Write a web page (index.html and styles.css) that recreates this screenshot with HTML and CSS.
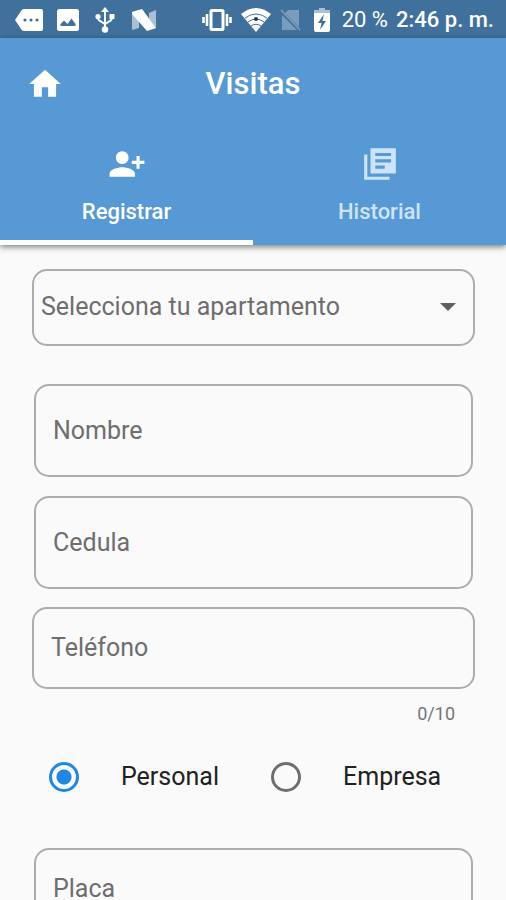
FILE: index.html
```html
<!DOCTYPE html>
<html lang="es">
    <head>
        <meta charset="UTF-8">
        <meta name="viewport" content="width=device-width, initial-scale=1">
        <title>Visitas</title>
        <link rel="stylesheet" href="styles.css">
    </head>
    <body>
        <div class="status">
            <div class="status-left">
                <svg width="28" height="24" viewBox="0 0 28 24">
                    <path fill="#fff" d="M9 1h17q2 0 2 2v18q0 2-2 2H9q-2 0-3-2L0 12l6-9q1-2 3-2z"/>
                    <g fill="#40719d"><circle cx="10" cy="12" r="1.6"/><circle cx="16" cy="12" r="1.6"/><circle cx="22" cy="12" r="1.6"/></g>
                </svg>
                <svg width="22" height="24" viewBox="0 0 22 24">
                    <rect y="1" width="22" height="22" rx="2.5" fill="#fff"/>
                    <path fill="#40719d" d="M3.500 18v-2l3.500-3.500 3.500 3.500 4-5.500 4 5.500v2z"/>
                </svg>
                <svg width="24" height="26" viewBox="0 0 24 26">
                    <g fill="none" stroke="#fff" stroke-width="2">
                        <path d="M12 4v18M5 9v2q0 2 2 3l5 3 5-3q2-1 2-3V9"/>
                    </g>
                    <g fill="#fff"><path d="M12 0l4 5H8z"/><circle cx="12" cy="22.500" r="3.200"/><circle cx="5" cy="9.500" r="2.600"/><path d="M16.500 7h5v5h-5z"/></g>
                </svg>
                <svg width="26" height="24" viewBox="0 0 26 24">
                    <path fill="#a9c0d5" d="M1 4l7-2v18l-7 2zM18 5l7-3v18l-7 2z"/>
                    <path fill="#fff" d="M1 4l10-3 14 19-9 3L1 6z"/>
                </svg>
            </div>
            <div class="status-right">
                <svg width="30" height="24" viewBox="0 0 30 24">
                    <rect x="9" y="2.500" width="12" height="19" rx="1" fill="none" stroke="#fff" stroke-width="3"/>
                    <path fill="none" stroke="#fff" stroke-width="2.600" d="M5 6v12M25 6v12M1.500 9v6M28.500 9v6"/>
                </svg>
                <svg width="32" height="26" viewBox="0 0 32 26">
                    <path fill="#fff" d="M1 7Q16-5 31 7L16 25z"/>
                    <path fill="none" stroke="#40719d" stroke-width="1" d="M5 11q11-8 22 0M8 15q8-6 16 0M11 19q5-3.500 10 0"/>
                    <circle cx="16" cy="12" r="2" fill="#173a59"/>
                </svg>
                <svg width="22" height="24" viewBox="0 0 22 24">
                    <path fill="#7b9dbd" d="M8 2h11v17L5 5zM2 7l15 15H2z"/>
                    <path stroke="#7b9dbd" stroke-width="1.800" d="M1 2l19 20"/>
                </svg>
                <svg width="24" height="26" viewBox="0 0 24 26">
                    <path fill="#a9c0d5" d="M9 1h6v2h5v4H4V3h5z"/>
                    <path fill="#fff" d="M4 6h16v17q0 2-2 2H6q-2 0-2-2z"/>
                    <path fill="#40719d" d="M14 7l-6 9h3.500L10 23l6-9h-3.500z"/>
                </svg>
                <span>20 %</span>
                <span class="time">2:46 p. m.</span>
            </div>
        </div>
        <header class="header">
            <div class="bar">
                <a class="home" href="#" aria-label="Inicio">
                    <svg width="38" height="38" viewBox="0 0 24 24"><path fill="#fff" d="M10 20v-6h4v6h5v-8h3L12 3 2 12h3v8z"/></svg>
                </a>
                <h1 class="title">Visitas</h1>
            </div>
            <nav class="tabs">
                <a class="tab active" href="#registrar">
                    <svg width="38" height="38" viewBox="0 0 24 24"><path fill="currentColor" d="M9 12c2.210 0 4-1.790 4-4s-1.790-4-4-4-4 1.790-4 4 1.790 4 4 4zm0 2c-2.670 0-8 1.340-8 4v2h16v-2c0-2.660-5.330-4-8-4zM20 10V7h-2v3h-3v2h3v3h2v-3h3v-2z"/></svg>
                    Registrar
                </a>
                <a class="tab" href="#historial">
                    <svg width="38" height="38" viewBox="0 0 24 24"><path fill="currentColor" d="M4 6H2v16h16v-2H4V6zm18-4H6v16h16V2zm-3 9H9V9h10v2zm-4 4H9v-2h6v2zm4-8H9V5h10v2z"/></svg>
                    Historial
                </a>
            </nav>
        </header>
        <form class="form" id="registrar">
            <div class="select">
                <select aria-label="Apartamento">
                    <option>Selecciona tu apartamento</option>
                </select>
                <svg class="arrow" width="16" height="8" viewBox="0 0 16 8"><path fill="#616161" d="M0 0h16L8 8z"/></svg>
            </div>
            <div class="group">
                <label class="field"><span>Nombre</span><input type="text" placeholder=" "></label>
                <label class="field"><span>Cedula</span><input type="text" placeholder=" "></label>
            </div>
            <label class="field short phone"><span>Teléfono</span><input type="tel" maxlength="10" placeholder=" "></label>
            <div class="counter">0/10</div>
            <div class="radios">
                <label class="radio"><input type="radio" name="tipo" checked>Personal</label>
                <label class="radio"><input type="radio" name="tipo">Empresa</label>
            </div>
            <div class="group">
                <label class="field short"><span>Placa</span><input type="text" placeholder=" "></label>
            </div>
        </form>
    </body>
</html>
```
FILE: styles.css
```css
* {
    box-sizing: border-box;
}

body {
    display: flex;
    flex-direction: column;
    height: 100vh;
    margin: 0;
    overflow: hidden;
    color: #212121;
    font: 25px/32px Roboto, "Liberation Sans", sans-serif;
    background-color: #fafafa;
}

svg {
    display: block;
    flex: none;
}

.status {
    display: flex;
    flex: none;
    justify-content: space-between;
    align-items: center;
    height: 38px;
    padding: 2px 12px 0 15px;
    color: #fff;
    font-size: 22px;
    white-space: nowrap;
    background-color: #40719d;
}

.status-left, .status-right {
    display: flex;
    align-items: center;
}

.status-left {
    gap: 14px;
}

.status-right {
    gap: 8px;
}

.time {
    font-weight: 500;
}

/* header */
.header {
    position: relative;
    flex: none;
    background-color: #5699d4;
    box-shadow: 0 2px 6px rgba(0, 0, 0, 0.5);
}

.bar {
    display: grid;
    grid-template-columns: 38px 1fr 38px;
    align-items: center;
    height: 91px;
    padding: 0 26px;
}

.title {
    margin: 0;
    color: #fff;
    font-size: 31px;
    font-weight: 500;
    text-align: center;
}

.tabs {
    display: flex;
}

.tab {
    display: flex;
    flex: 1;
    flex-direction: column;
    align-items: center;
    gap: 13px;
    height: 116px;
    padding-top: 16px;
    color: #cde4f8;
    font-size: 22px;
    font-weight: 500;
    text-decoration: none;
    border-bottom: 5px solid transparent;
}

.tab.active {
    color: #fff;
    border-bottom-color: #fff;
}

/* form */
.form {
    flex: 1;
    min-height: 0;
    padding: 24px 31px 24px 32px;
    overflow-y: auto;
    scrollbar-width: none;
}

.select {
    position: relative;
    margin-bottom: 38px;
}

.select select {
    width: 100%;
    height: 77px;
    padding: 0 48px 2px 7px;
    color: #6e6e6e;
    font: inherit;
    border: 2px solid #adadad;
    border-radius: 15px;
    background-color: transparent;
    appearance: none;
}

.arrow {
    position: absolute;
    top: 34px;
    right: 19px;
    pointer-events: none;
}

.group {
    display: grid;
    gap: 19px;
    padding: 0 2px;
}

.field {
    display: grid;
    align-items: center;
    height: 93px;
    color: #6e6e6e;
    border: 2px solid #adadad;
    border-radius: 15px;
}

.field span, .field input {
    grid-area: 1 / 1;
    margin: 0 17px;
}

.field input {
    min-width: 0;
    padding: 0;
    color: #212121;
    font: inherit;
    border: 0;
    outline: 0;
    background-color: transparent;
}

.field:focus-within {
    border-color: #1e88e5;
}

.field:focus-within input, .field input:not(:placeholder-shown) {
    align-self: end;
}

.field:focus-within span, .field:has(input:not(:placeholder-shown)) span {
    align-self: start;
    font-size: 18px;
}

.short {
    height: 82px;
}

.phone {
    margin-top: 18px;
}

.counter {
    padding: 9px 20px 0 0;
    color: #757575;
    font-size: 18px;
    text-align: right;
}

.radios {
    display: grid;
    grid-template-columns: 1fr 1fr;
    gap: 18px;
    padding: 31px 0 55px 17px;
}

.radio {
    display: flex;
    align-items: center;
    gap: 42px;
}

.radio input {
    flex: none;
    width: 30px;
    height: 30px;
    margin: 0;
    border: 3px solid #6e6e6e;
    border-radius: 50%;
    appearance: none;
}

.radio input:checked {
    border-color: #1e88e5;
    background: radial-gradient(circle, #1e88e5 7px, transparent 8px);
}
```
